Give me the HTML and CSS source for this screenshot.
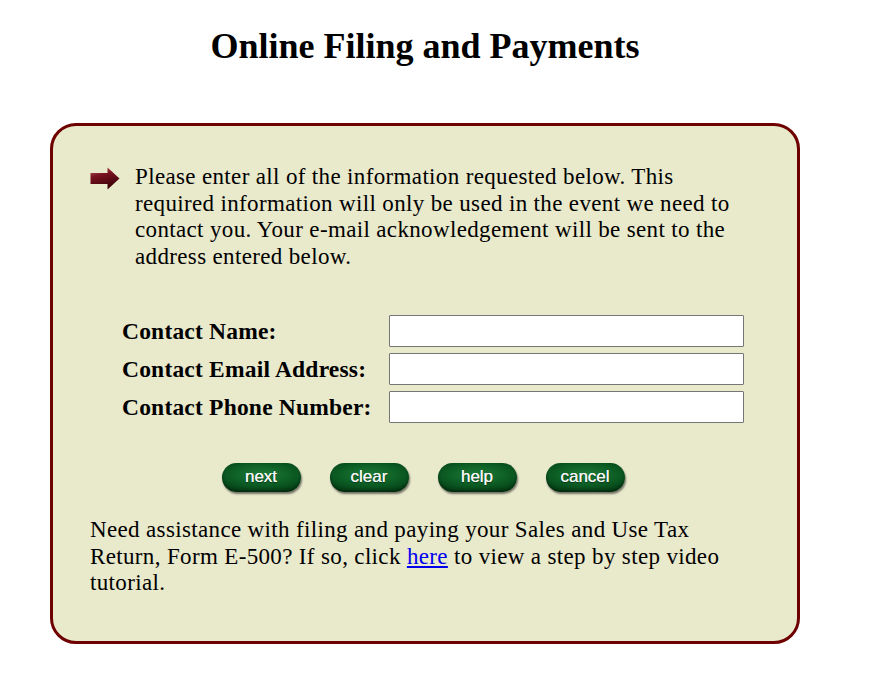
FILE: index.html
```html
<!DOCTYPE html>
<html>
<head>
<meta charset="utf-8">
<link rel="stylesheet" href="styles.css">
</head>
<body>
<div class="page">
  <h1 class="title">Online Filing and Payments</h1>
  <div class="panel">
    <div class="intro">
      <svg class="arrow" width="30" height="23" viewBox="0 0 30 23">
        <defs>
          <linearGradient id="ag" x1="0" y1="0" x2="0.35" y2="1">
            <stop offset="0" stop-color="#b86a70"/>
            <stop offset="0.4" stop-color="#7a1420"/>
            <stop offset="1" stop-color="#3c0008"/>
          </linearGradient>
        </defs>
        <path d="M0.5 6 H17.5 V0.5 L29.5 11.5 L17.5 22.5 V17 H0.5 Z" fill="url(#ag)"/>
      </svg>
      <p class="intro-text">Please enter all of the information requested below. This required information will only be used in the event we need to contact you. Your e-mail acknowledgement will be sent to the address entered below.</p>
    </div>
    <div class="form">
      <label class="label" for="cn">Contact Name:</label>
      <input class="field" id="cn" type="text">
      <label class="label" for="ce">Contact Email Address:</label>
      <input class="field" id="ce" type="text">
      <label class="label" for="cp">Contact Phone Number:</label>
      <input class="field" id="cp" type="text">
    </div>
    <div class="buttons">
      <button class="pill">next</button>
      <button class="pill">clear</button>
      <button class="pill">help</button>
      <button class="pill">cancel</button>
    </div>
    <p class="help-text">Need assistance with filing and paying your Sales and Use Tax Return, Form E-500? If so, click <a href="#">here</a> to view a step by step video tutorial.</p>
  </div>
</div>
</body>
</html>
```
FILE: styles.css
```css
html, body {
  margin: 0;
  padding: 0;
  background: #ffffff;
}
body {
  padding: 8px;
  font-family: "Liberation Serif", "Times New Roman", serif;
  color: #000;
}
.page {
  width: 834px;
}
.title {
  margin: 0;
  padding-top: 18px;
  text-align: center;
  font-size: 36px;
  font-weight: bold;
  line-height: 41px;
}
.panel {
  box-sizing: border-box;
  width: 750px;
  margin: 56px auto 0;
  border: 3px solid #6e0000;
  border-radius: 26px;
  background: #e9e9cc;
  padding: 38px 37px 44px 37px;
}
.intro {
  display: flex;
  align-items: flex-start;
  gap: 15px;
}
.arrow {
  flex: none;
  margin-top: 3px;
}
.intro-text {
  margin: 0;
  font-size: 23px;
  letter-spacing: 0.35px;
  line-height: 26.5px;
  width: 612px;
}
.form {
  display: grid;
  grid-template-columns: 267px 355px;
  row-gap: 6px;
  align-items: center;
  margin: 45px 0 0 32px;
}
.label {
  font-weight: bold;
  font-size: 23.5px;
  letter-spacing: 0.2px;
  line-height: 32px;
}
.field {
  box-sizing: border-box;
  width: 355px;
  height: 32px;
  margin: 0;
  border: 1px solid #767676;
  border-radius: 1px;
  background: #fff;
}
.buttons {
  display: flex;
  justify-content: center;
  gap: 29px;
  margin: 40px 0 0 -4px;
}
.pill {
  width: 79px;
  height: 29px;
  border: none;
  border-radius: 15px;
  padding: 0 0 2px;
  background: radial-gradient(ellipse 75% 65% at 50% 40%, #1e7c38 0%, #0c5c24 55%, #043c14 100%);
  box-shadow: 1px 2px 2px rgba(0,0,0,0.5), inset 0 -2px 3px rgba(0,0,0,0.35);
  color: #f4f4f4;
  font-family: "Liberation Sans", Arial, sans-serif;
  font-size: 17px;
  text-shadow: 0 0 0.6px #ffffff, 0 1px 1px rgba(0,0,0,0.5);
  cursor: pointer;
}
.help-text {
  margin: 25px 0 0;
  font-size: 23px;
  letter-spacing: 0.35px;
  line-height: 26.5px;
  width: 655px;
}
.help-text a {
  color: #0000ee;
}
```
